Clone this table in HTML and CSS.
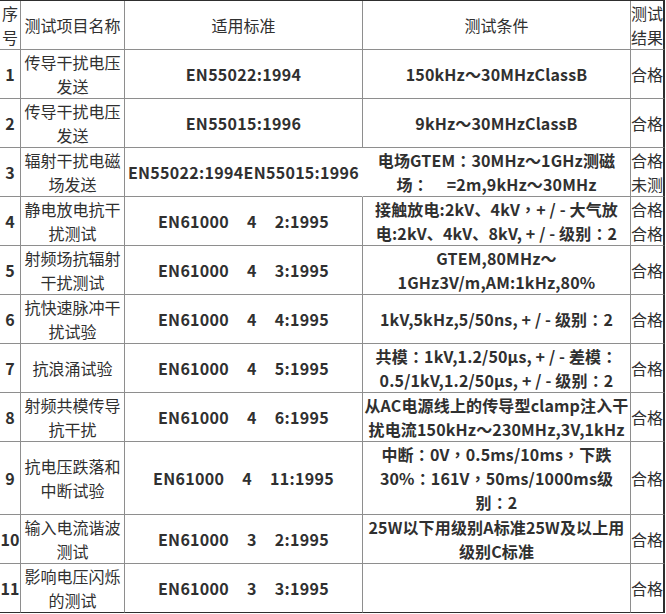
FILE: index.html
```html
<!DOCTYPE html>
<html lang="zh-CN">
<head>
<meta charset="utf-8">
<title>测试项目</title>
<link rel="stylesheet" href="styles.css">
</head>
<body>
<table class="report">
  <colgroup>
    <col class="c-no">
    <col class="c-name">
    <col class="c-std">
    <col class="c-cond">
    <col class="c-res">
  </colgroup>
  <thead>
    <tr>
      <th class="no">序号</th>
      <th>测试项目名称</th>
      <th>适用标准</th>
      <th>测试条件</th>
      <th class="res">测试结果</th>
    </tr>
  </thead>
  <tbody>
    <tr>
      <td class="no">1</td>
      <td class="name">传导干扰电压发送</td>
      <td class="std">EN55022:1994</td>
      <td class="cond">150kHz～30MHzClassB</td>
      <td class="res">合格</td>
    </tr>
    <tr>
      <td class="no">2</td>
      <td class="name">传导干扰电压发送</td>
      <td class="std">EN55015:1996</td>
      <td class="cond">9kHz～30MHzClassB</td>
      <td class="res">合格</td>
    </tr>
    <tr>
      <td class="no">3</td>
      <td class="name">辐射干扰电磁场发送</td>
      <td class="std std-open">EN55022:1994EN55015:1996</td>
      <td class="cond">电场GTEM<span class="fw" lang="zh-TW">：</span>30MHz～1GHz测磁<br>场<span class="fw" lang="zh-TW">：</span><i class="blank"></i>=2m,9kHz～30MHz</td>
      <td class="res">合格未测</td>
    </tr>
    <tr>
      <td class="no">4</td>
      <td class="name">静电放电抗干扰测试</td>
      <td class="std">EN61000<i class="gap"></i>4<i class="gap"></i>2:1995</td>
      <td class="cond">接触放电:2kV、4kV<span class="fw" lang="zh-TW">，</span>+ / - 大气放<br>电:2kV、4kV、8kV, + / - 级别<span class="fw" lang="zh-TW">：</span>2</td>
      <td class="res">合格合格</td>
    </tr>
    <tr>
      <td class="no">5</td>
      <td class="name">射频场抗辐射干扰测试</td>
      <td class="std">EN61000<i class="gap"></i>4<i class="gap"></i>3:1995</td>
      <td class="cond">GTEM,80MHz～<br>1GHz3V/m,AM:1kHz,80%</td>
      <td class="res">合格</td>
    </tr>
    <tr>
      <td class="no">6</td>
      <td class="name">抗快速脉冲干扰试验</td>
      <td class="std">EN61000<i class="gap"></i>4<i class="gap"></i>4:1995</td>
      <td class="cond">1kV,5kHz,5/50ns, + / - 级别<span class="fw" lang="zh-TW">：</span>2</td>
      <td class="res">合格</td>
    </tr>
    <tr>
      <td class="no">7</td>
      <td class="name">抗浪涌试验</td>
      <td class="std">EN61000<i class="gap"></i>4<i class="gap"></i>5:1995</td>
      <td class="cond">共模<span class="fw" lang="zh-TW">：</span>1kV,1.2/50μs, + / - 差模<span class="fw" lang="zh-TW">：</span><br>0.5/1kV,1.2/50μs, + / - 级别<span class="fw" lang="zh-TW">：</span>2</td>
      <td class="res">合格</td>
    </tr>
    <tr>
      <td class="no">8</td>
      <td class="name">射频共模传导抗干扰</td>
      <td class="std">EN61000<i class="gap"></i>4<i class="gap"></i>6:1995</td>
      <td class="cond">从AC电源线上的传导型clamp注入干<br>扰电流150kHz～230MHz,3V,1kHz</td>
      <td class="res">合格</td>
    </tr>
    <tr class="tall">
      <td class="no">9</td>
      <td class="name">抗电压跌落和中断试验</td>
      <td class="std">EN61000<i class="gap"></i>4<i class="gap"></i>11:1995</td>
      <td class="cond">中断<span class="fw" lang="zh-TW">：</span>0V<span class="fw" lang="zh-TW">，</span>0.5ms/10ms<span class="fw" lang="zh-TW">，</span>下跌<br>30%<span class="fw" lang="zh-TW">：</span>161V<span class="fw" lang="zh-TW">，</span>50ms/1000ms级<br>别<span class="fw" lang="zh-TW">：</span>2</td>
      <td class="res">合格</td>
    </tr>
    <tr>
      <td class="no">10</td>
      <td class="name">输入电流谐波测试</td>
      <td class="std">EN61000<i class="gap"></i>3<i class="gap"></i>2:1995</td>
      <td class="cond">25W以下用级别A标准25W及以上用<br>级别C标准</td>
      <td class="res">合格</td>
    </tr>
    <tr class="last">
      <td class="no">11</td>
      <td class="name">影响电压闪烁的测试</td>
      <td class="std">EN61000<i class="gap"></i>3<i class="gap"></i>3:1995</td>
      <td class="cond"></td>
      <td class="res">合格</td>
    </tr>
  </tbody>
</table>
</body>
</html>
```

FILE: styles.css
```css
html, body {
  margin: 0;
  padding: 0;
  background: #ffffff;
}

.report {
  border-collapse: separate;
  border-spacing: 0;
  table-layout: fixed;
  width: 665px;
  border-top: 1px solid #2e2e2e;
  font-family: "Noto Sans CJK SC", "Microsoft YaHei", sans-serif;
  font-size: 16px;
  line-height: 24px;
  color: #303030;
}

.c-no { width: 21px; }
.c-name { width: 104px; }
.c-std { width: 238px; }
.c-cond { width: 268px; }
.c-res { width: 34px; }

.report th,
.report td {
  padding: 0;
  height: 48px;
  border-right: 1px solid #8e8e8e;
  border-bottom: 1px solid #8e8e8e;
  text-align: center;
  vertical-align: middle;
  word-break: break-all;
}

.report th {
  font-weight: normal;
}

.report th:last-child,
.report td:last-child {
  border-right: 2px solid #2e2e2e;
}

.report .res {
  text-align: left;
  font-weight: normal;
}

.report .no {
  font-weight: bold;
}

.report th.no {
  font-weight: normal;
}

.report .name {
  font-weight: normal;
}

.report .std,
.report .cond {
  font-weight: bold;
  white-space: nowrap;
}

.report .std {
  letter-spacing: 0.3px;
}

.report .cond {
  letter-spacing: 0.15px;
}

.report .std-open {
  border-right-color: transparent;
  overflow: visible;
}

.report .tall td {
  height: 72px;
}

.report .last td {
  border-bottom: 1px solid #2e2e2e;
}

.fw {
  font-family: "Noto Sans CJK TC", "Noto Sans CJK SC", sans-serif;
}

.gap {
  display: inline-block;
  width: 18px;
}

.blank {
  display: inline-block;
  width: 18px;
}
```
